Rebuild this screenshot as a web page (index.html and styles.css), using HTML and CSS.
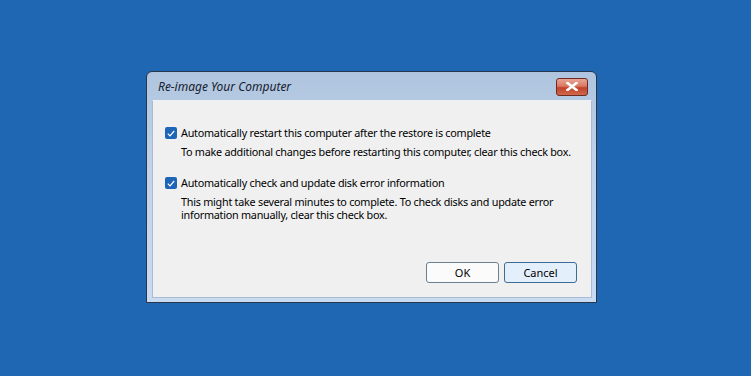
FILE: index.html
```html
<!DOCTYPE html>
<html lang="en">
<head>
    <meta charset="UTF-8">
    <title>Re-image Your Computer</title>
    <link rel="stylesheet" href="styles.css">
</head>
<body>
    <div class="window">
        <div class="titlebar">
            <span class="title">Re-image Your Computer</span>
            <button class="close-btn" aria-label="Close">
                <svg width="12" height="9" viewBox="0 0 12 9">
                    <path d="M1.5 1 L10.5 8 M10.5 1 L1.5 8" stroke="#fff" stroke-width="2.6" stroke-linecap="square"/>
                </svg>
            </button>
        </div>

        <div class="content">
            <div class="option">
                <span class="check">
                    <svg width="8" height="7" viewBox="0 0 8 7">
                        <path d="M0.8 3.6 L3 5.8 L7.2 1" fill="none" stroke="#fff" stroke-width="1.2"/>
                    </svg>
                </span>
                <div class="option-text">
                    <div class="option-label">Automatically restart this computer after the restore is complete</div>
                    <div class="option-desc">To make additional changes before restarting this computer, clear this check box.</div>
                </div>
            </div>

            <div class="option">
                <span class="check">
                    <svg width="8" height="7" viewBox="0 0 8 7">
                        <path d="M0.8 3.6 L3 5.8 L7.2 1" fill="none" stroke="#fff" stroke-width="1.2"/>
                    </svg>
                </span>
                <div class="option-text">
                    <div class="option-label">Automatically check and update disk error information</div>
                    <div class="option-desc">This might take several minutes to complete. To check disks and update error information manually, clear this check box.</div>
                </div>
            </div>

            <div class="buttons">
                <button class="btn">OK</button>
                <button class="btn btn-focus">Cancel</button>
            </div>
        </div>
    </div>
</body>
</html>
```

FILE: styles.css
```css
body {
    margin: 0;
    height: 376px;
    background: #1f66b3;
    font-family: "Noto Sans", sans-serif;
    padding: 71px 0 0 146px;
    box-sizing: border-box;
}

.window {
    width: 451px;
    height: 232px;
    box-sizing: border-box;
    border: 1px solid #26364b;
    border-radius: 6px 6px 0 0;
    background: linear-gradient(to bottom, #afc4de, #c0d3ea 40%, #c9dbf0);
    padding: 0 4px 4px 5px;
    display: flex;
    flex-direction: column;
}

.titlebar {
    height: 28px;
    display: flex;
    align-items: center;
    justify-content: space-between;
    padding-left: 6px;
    flex-shrink: 0;
}

.title {
    font-style: italic;
    font-size: 12px;
    color: #16202e;
    margin-top: 1px;
}

.close-btn {
    width: 32px;
    height: 18px;
    margin-right: 4px;
    margin-top: 1px;
    border: 1px solid #6f2a22;
    border-radius: 3px;
    background: linear-gradient(to bottom, #e8a596, #d97962 45%, #c2412a 55%, #cf6a4c);
    display: flex;
    align-items: center;
    justify-content: center;
    padding: 0;
}

.content {
    flex: 1;
    background: #f0f0f0;
    border: 1px solid #a8bcd4;
    border-top-color: #eef2f7;
    padding: 23px 14px 14px 12px;
    display: flex;
    flex-direction: column;
    gap: 16px;
}

.option {
    display: flex;
    gap: 4px;
    align-items: flex-start;
}

.check {
    width: 12px;
    height: 12px;
    margin-top: 3px;
    border-radius: 2px;
    background: #1d65b6;
    display: flex;
    align-items: center;
    justify-content: center;
    flex-shrink: 0;
}

.option-text {
    font-size: 10.8px;
    letter-spacing: -0.25px;
    color: #000;
}

.option-label {
    line-height: 17px;
}

.option-desc {
    margin-top: 4px;
    line-height: 13px;
    width: 395px;
}

.buttons {
    margin-top: auto;
    display: flex;
    justify-content: flex-end;
    gap: 5px;
}

.btn {
    width: 73px;
    height: 21px;
    border: 1px solid #6e7f91;
    border-radius: 3px;
    background: #fbfbfb;
    font-family: "Noto Sans", sans-serif;
    font-size: 11px;
    color: #000;
    padding: 0;
}

.btn-focus {
    background: #e3effa;
    border-color: #3d6c99;
}
```
